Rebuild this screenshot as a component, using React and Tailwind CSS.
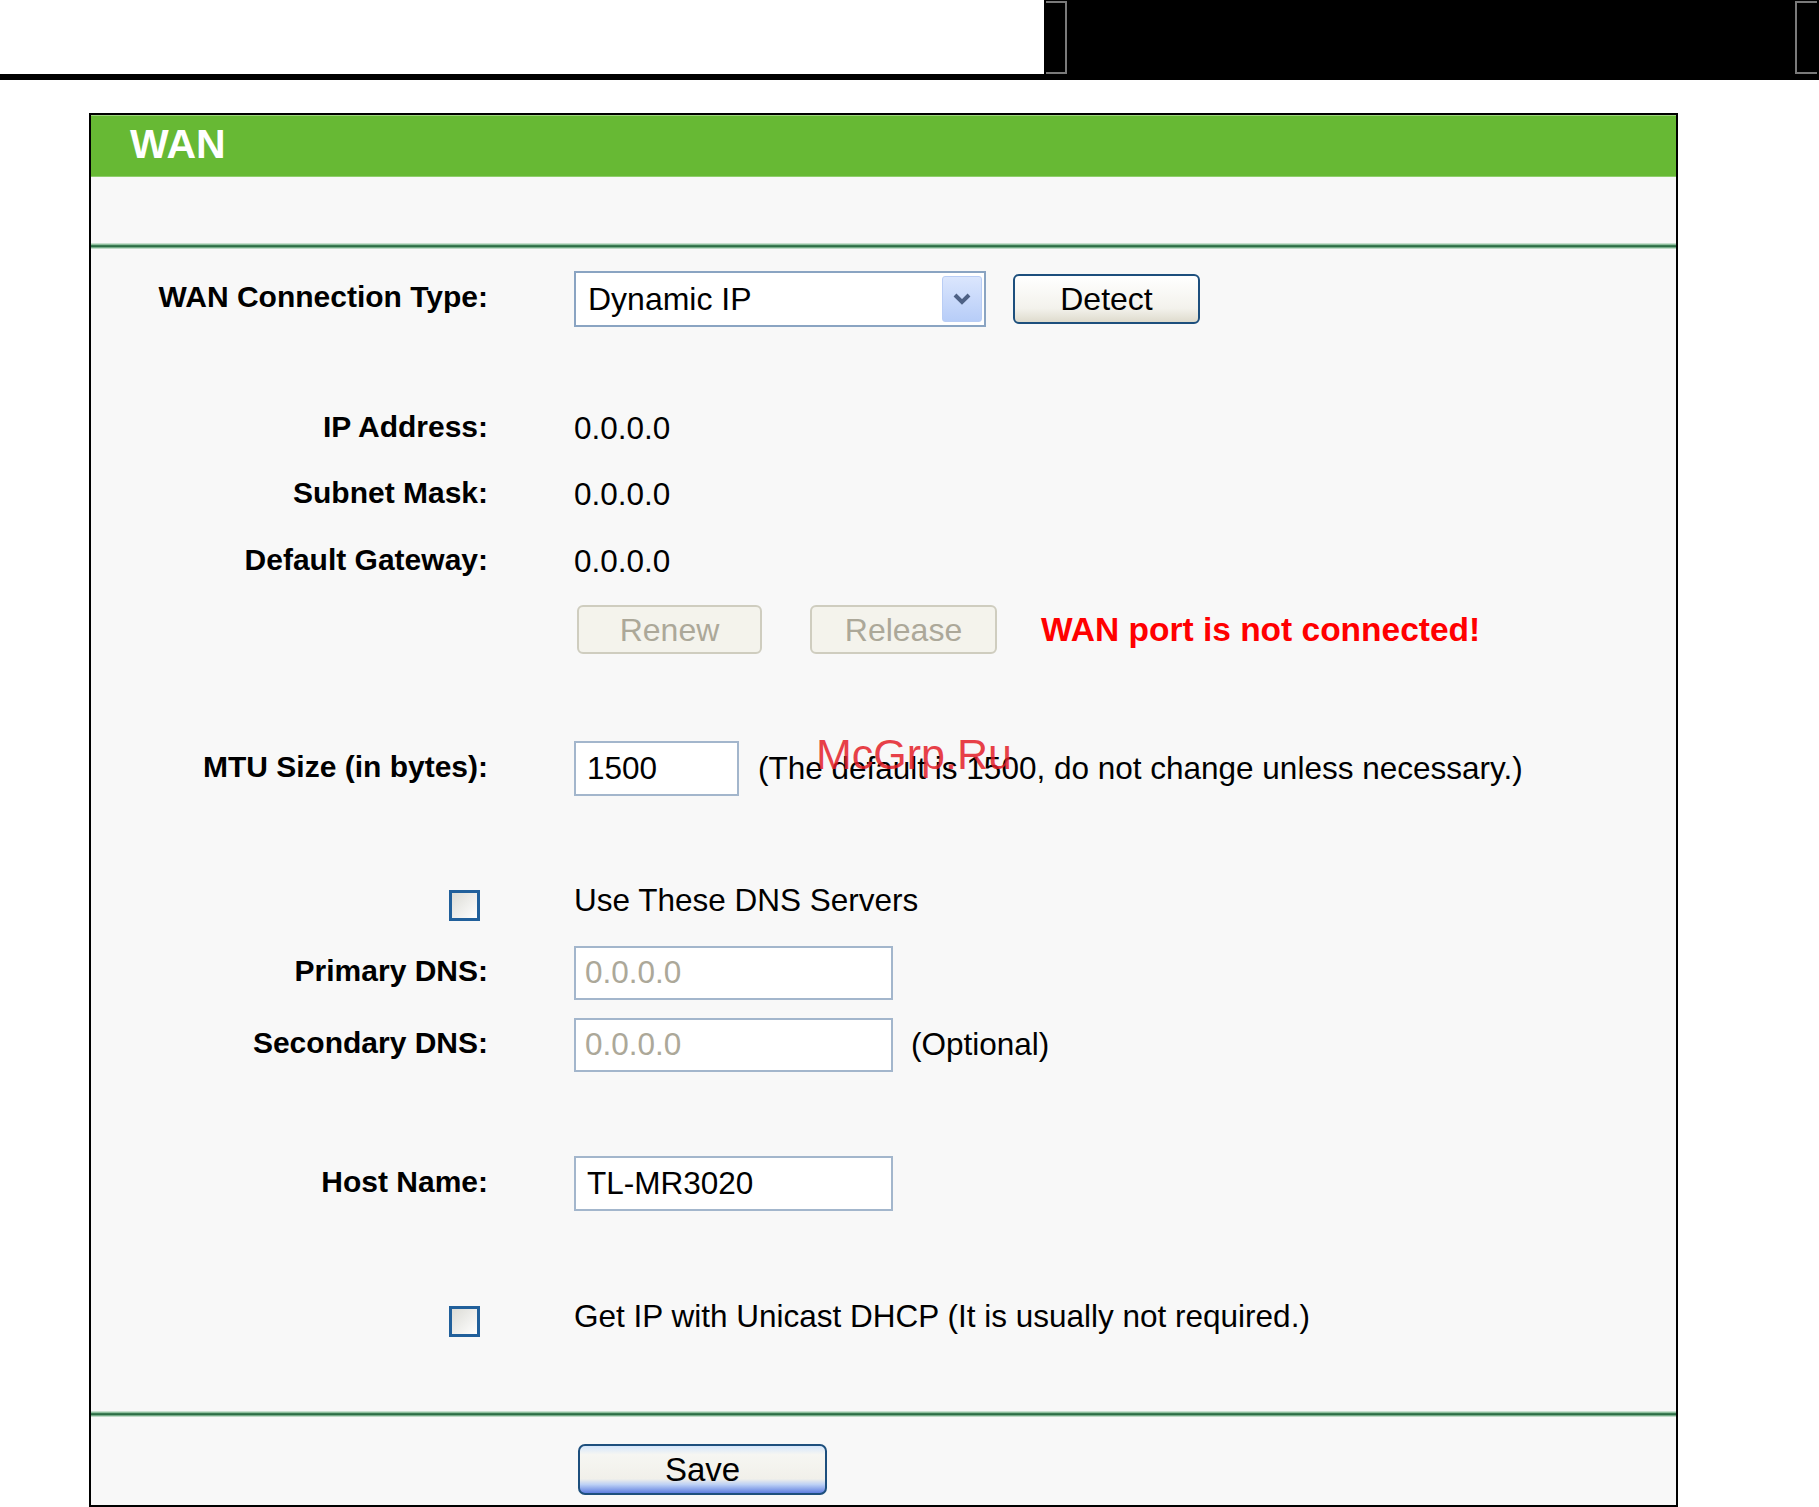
import React from "react";

const font = { fontFamily: '"Liberation Sans", Arial, sans-serif' };

function Label({ children }) {
  return (
    <div className="w-[397px] shrink-0 text-right text-[30px] font-bold text-black leading-none -mt-[4px]">
      {children}
    </div>
  );
}

function Row({ label, mt, h, children, extra }) {
  return (
    <div className={`relative flex items-center ${mt} ${h}`}>
      <Label>{label}</Label>
      <div className="ml-[86px] flex items-center h-full">{children}</div>
      {extra}
    </div>
  );
}

function Checkbox() {
  return (
    <div className="w-[31px] h-[31px] border-[3px] border-[#21609b] bg-[linear-gradient(135deg,#dcdcd6,#ffffff)]" />
  );
}

function Sep() {
  return (
    <div className="h-[6px] bg-[linear-gradient(#e3efe6,#8fbf9e_25%,#2c6e45_45%,#2c6e45_60%,#8fbf9e_80%,#e3efe6)]" />
  );
}

export default function App() {
  return (
    <div style={font} className="w-[1819px] h-[1507px] bg-white overflow-hidden">
      {/* top strip */}
      <div className="flex h-[74px]">
        <div className="w-[1044px] bg-white" />
        <div className="flex-1 bg-black flex">
          <div className="ml-[2px] mt-[1px] w-[21px] h-[73px] border-t-2 border-b-2 border-r-2 border-[#7a7a7a]" />
          <div className="flex-1" />
          <div className="mr-[2px] mt-[1px] w-[22px] h-[73px] border-t-2 border-b-2 border-l-2 border-[#7a7a7a]" />
        </div>
      </div>
      <div className="h-[6px] bg-black" />

      {/* panel */}
      <div className="ml-[89px] mt-[33px] w-[1589px] h-[1394px] border-2 border-black bg-[#f8f8f8] flex flex-col">
        <div className="h-[62px] bg-[#67b934] border-t border-[#9ed37c] border-b border-b-[#8fce6c] flex items-center">
          <span className="ml-[39px] text-[41px] font-bold text-white leading-none -mt-[3px]">WAN</span>
        </div>
        <div className="h-[66px]" />
        <Sep />

        {/* WAN connection type */}
        <Row label="WAN Connection Type:" mt="mt-[22px]" h="h-[56px]">
          <div className="w-[412px] h-[56px] border-2 border-[#8aa4c2] bg-white flex items-center">
            <span className="ml-[12px] flex-1 text-[32px] text-black leading-none">Dynamic IP</span>
            <div className="mr-[2px] w-[40px] h-[46px] rounded-[3px] border border-[#b9cdf5] bg-[linear-gradient(#dbe6fd,#b7cdf8)] flex items-center justify-center">
              <svg width="20" height="14" viewBox="0 0 20 14">
                <path d="M3 3 L10 10 L17 3" fill="none" stroke="#4d6185" strokeWidth="4" />
              </svg>
            </div>
          </div>
          <button className="ml-[27px] w-[187px] h-[50px] rounded-[6px] border-2 border-[#1d4f7d] bg-[linear-gradient(#ffffff,#f3f2ec_70%,#dedbcd)] text-[32px] text-black leading-none">
            Detect
          </button>
        </Row>

        <Row label="IP Address:" mt="mt-[82px]" h="h-[40px]">
          <span className="text-[31.5px] text-black leading-none">0.0.0.0</span>
        </Row>
        <Row label="Subnet Mask:" mt="mt-[26px]" h="h-[40px]">
          <span className="text-[31.5px] text-black leading-none">0.0.0.0</span>
        </Row>
        <Row label="Default Gateway:" mt="mt-[27px]" h="h-[40px]">
          <span className="text-[31.5px] text-black leading-none">0.0.0.0</span>
        </Row>

        <Row label="" mt="mt-[23px]" h="h-[49px]">
          <button className="ml-[3px] w-[185px] h-[49px] rounded-[6px] border-2 border-[#cfcdbf] bg-[#f4f3ec] text-[32px] text-[#aca899] leading-none">
            Renew
          </button>
          <button className="ml-[48px] w-[187px] h-[49px] rounded-[6px] border-2 border-[#cfcdbf] bg-[#f4f3ec] text-[32px] text-[#aca899] leading-none">
            Release
          </button>
          <span className="ml-[44px] text-[33.5px] font-bold text-[#ff0000] leading-none">
            WAN port is not connected!
          </span>
        </Row>

        <Row
          label="MTU Size (in bytes):"
          mt="mt-[87px]"
          h="h-[55px]"
          extra={
            <span className="absolute left-[725px] top-[-8px] text-[43px] text-[rgba(228,30,40,0.85)] leading-none">
              McGrp.Ru
            </span>
          }
        >
          <div className="w-[165px] h-[55px] border-2 border-[#a3b6cc] bg-white flex items-center">
            <span className="ml-[11px] text-[31.5px] text-black leading-none">1500</span>
          </div>
          <span className="ml-[19px] text-[31.5px] text-black leading-none">
            (The default is 1500, do not change unless necessary.)
          </span>
        </Row>

        <div className="flex items-center mt-[89px] h-[40px]">
          <div className="w-[397px] shrink-0 flex justify-end pr-[8px]">
            <Checkbox />
          </div>
          <span className="ml-[86px] text-[31.5px] text-black leading-none -mt-[8px]">Use These DNS Servers</span>
        </div>

        <Row label="Primary DNS:" mt="mt-[21px]" h="h-[54px]">
          <div className="w-[319px] h-[54px] border-2 border-[#a3b6cc] bg-white flex items-center">
            <span className="ml-[9px] text-[31.5px] text-[#aca899] leading-none">0.0.0.0</span>
          </div>
        </Row>
        <Row label="Secondary DNS:" mt="mt-[18px]" h="h-[54px]">
          <div className="w-[319px] h-[54px] border-2 border-[#a3b6cc] bg-white flex items-center">
            <span className="ml-[9px] text-[31.5px] text-[#aca899] leading-none">0.0.0.0</span>
          </div>
          <span className="ml-[18px] text-[31.5px] text-black leading-none">(Optional)</span>
        </Row>

        <Row label="Host Name:" mt="mt-[84px]" h="h-[55px]">
          <div className="w-[319px] h-[55px] border-2 border-[#a3b6cc] bg-white flex items-center">
            <span className="ml-[11px] text-[31.5px] text-black leading-none">TL-MR3020</span>
          </div>
        </Row>

        <div className="flex items-center mt-[90px] h-[40px]">
          <div className="w-[397px] shrink-0 flex justify-end pr-[8px]">
            <Checkbox />
          </div>
          <span className="ml-[86px] text-[31.5px] text-black leading-none -mt-[8px]">
            Get IP with Unicast DHCP (It is usually not required.)
          </span>
        </div>

        <div className="mt-[70px]">
          <Sep />
        </div>

        <div className="mt-[27px] flex">
          <button className="ml-[487px] w-[249px] h-[51px] rounded-[7px] border-2 border-[#1d4f7d] bg-[linear-gradient(#d5e6fb,#f6f6f2_18%,#f1f0ea_70%,#bcd0f5_82%,#5f7fe0)] text-[33px] text-black leading-none">
            Save
          </button>
        </div>
      </div>
    </div>
  );
}
